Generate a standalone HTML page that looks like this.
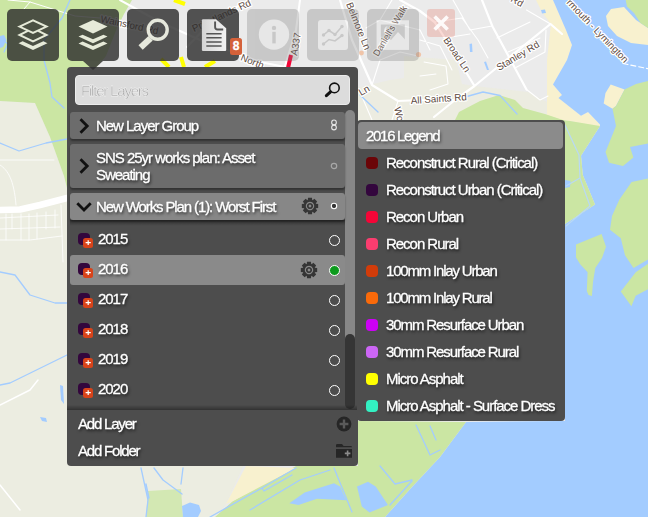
<!DOCTYPE html>
<html lang="en">
<head>
<meta charset="utf-8">
<title>Layers</title>
<style>
*{box-sizing:border-box;margin:0;padding:0}
html,body{width:648px;height:517px;overflow:hidden;background:#e8e8e8}
body{position:relative;font-family:"Liberation Sans",sans-serif;font-size:15px;letter-spacing:-1.03px;color:#fff;-webkit-text-stroke:0.3px #fff}
#map{position:absolute;left:0;top:0;width:648px;height:517px;display:block}
.tb{position:absolute;top:9px;width:52px;height:52px;border-radius:5px;background:rgba(42,42,42,.8)}
.tb.dis{background:rgb(122,122,122);opacity:.3}
.tb svg{position:absolute;left:0;top:0;width:52px;height:52px}
#close{position:absolute;left:427px;top:9px;width:28px;height:28px;border-radius:3px;background:rgba(226,84,60,.22)}
#badge{position:absolute;left:230px;top:38px;width:12px;height:17px;border-radius:2.5px;background:#d4613a;color:#fff;font-weight:bold;font-size:12px;line-height:17px;text-align:center;letter-spacing:0}
#panel{will-change:transform;position:absolute;left:67px;top:67px;width:291px;height:399px;background:#4d4d4d;border-radius:4px}
#arrow{position:absolute;left:83px;top:61px;width:0;height:0;border-left:10px solid transparent;border-right:10px solid transparent;border-top:9.5px solid rgba(45,45,45,.8);z-index:5}
#filter{position:absolute;left:8px;top:8px;width:274.5px;height:30px;background:#dcdcdc;border:1px solid #ececec;border-radius:4px;color:#a6a6a6;font-size:15px;line-height:29px;padding-left:5px;letter-spacing:-1.2px}
.grp{position:absolute;left:3px;width:274.5px;background:#6c6c6c;border-radius:3px;box-shadow:0 2px 2px rgba(0,0,0,.35);text-shadow:1px 2px 3px rgba(0,0,0,.7)}
.grp .t{position:absolute;left:26px;top:0;font-size:15px;line-height:17px}
.row{position:absolute;left:3px;width:274.5px;height:30px;border-radius:3px;text-shadow:1px 2px 3px rgba(0,0,0,.7)}
.row .t{position:absolute;left:28px;top:5px;font-size:15px;line-height:17px}
.row .ic{position:absolute;left:8px;top:8px;width:12px;height:12px;border-radius:4px;background:#33063d}
.row .pl{position:absolute;left:13px;top:13px;width:10px;height:10px;border-radius:2.5px;background:#d8431a}
.row .rd{position:absolute;left:258.5px;top:10px;width:11px;height:11px;border-radius:50%;border:1.7px solid #fff}
#legend{will-change:transform;position:absolute;left:357px;top:120px;width:208px;height:301px;background:#4d4d4d;border-radius:4px}
#ltitle{position:absolute;left:1px;top:2px;width:205px;height:27px;background:#8b8b8b;border-radius:4px;font-size:15px;line-height:27px;padding-left:8px;text-shadow:1px 2px 3px rgba(0,0,0,.6)}
.li{position:absolute;left:0;height:27px;width:208px;text-shadow:1px 2px 3px rgba(0,0,0,.7)}
.li i{position:absolute;left:9px;top:7px;width:12px;height:12px;border-radius:4px}
.li span{position:absolute;left:29px;top:4px;font-size:15px;line-height:17px;white-space:nowrap}
.foot{position:absolute;left:11px;letter-spacing:-1.2px;font-size:15px;line-height:17px;text-shadow:1px 2px 3px rgba(0,0,0,.7)}

.chev{position:absolute;left:8px;width:12px;height:18px}
.ind{position:absolute;left:259px;width:10px;height:14px}
.gear{position:absolute;width:20px;height:20px}
#sbtrack{position:absolute;left:278px;top:43px;width:10px;height:230px;background:#878787;border-radius:5px 5px 0 0}
#sbthumb{position:absolute;left:278px;top:267px;width:10px;height:75px;background:#353535;border-radius:5px}
#listshadow{position:absolute;left:3px;top:153px;width:275px;height:6px;background:linear-gradient(rgba(0,0,0,.35),rgba(0,0,0,0))}
#footline{position:absolute;left:0;top:338px;width:291px;height:5px;background:linear-gradient(rgba(0,0,0,0),rgba(0,0,0,.35))}
.row .pl svg{position:absolute;left:0;top:0;width:10px;height:10px}
</style>
</head>
<body>
<svg id="map" viewBox="0 0 648 517">
<rect width="648" height="517" fill="#ebebeb"/>
<!--MAPSTART-->
<!-- pale natural land -->
<polygon fill="#ecede1" points="0,101 35,103 50,137 64,176 67,188 130,188 130,517 0,517"/>
<polygon fill="#ecede1" points="130,460 246,460 226,504 215,517 130,517"/>
<polygon fill="#ecede6" points="0,68 6,68 6,100 0,100"/>
<!-- green top-left -->
<polygon fill="#cbe6a3" points="0,0 132,0 124,14 117,28 106,56 94,70 75,110 75,190 67,188 64,176 50,137 35,103 0,101"/>
<!-- pale patch mid top -->
<polygon fill="#ecece1" points="404,56 456,60 462,84 474.5,86 492,88 528,92 547,102 547,118 356,122 356,88 390,80 404,78"/>
<!-- beach strip -->
<polygon fill="#f8f1cf" points="536,0 553,0 566,30 572,45 567,60 553,84.4 562,95 558.5,98 581,115.7 588,112 600,124.5 598,127 570,121 547,120 547,60 551,24 542,12"/>
<!-- green below all saints rd -->
<polygon fill="#cbe6a3" points="455,120 459,112 480,101 499,95 515,100 523,108 545,114 566,121 566,130 455,130"/>
<!-- water -->
<polygon fill="#a3ccff" points="553,0 566,30 572,45 567,60 553,84.4 562,95 558.5,98 581,115.7 588,112 600,124.5 600,126 581,155.8 582.8,175 595,204.6 565,224 565,421 466,422 440,457 411,488 385,517 648,517 648,0"/>
<!-- harbour green by legend -->
<polygon fill="#cbe6a3" points="560,120 570,121 600,126 581,155.8 582.8,175 595,204.6 565,224 560,230"/><polygon fill="#a3ccff" points="565,180 570.6,181 570,187 565,188"/>
<!-- top right beach + green -->
<polygon fill="#f8f1cf" points="606,16 611,9 624,7 636,20 648,28 648,45 631,43 617,36 608,26"/>
<polygon fill="#cbe6a3" points="625.7,0 648,0 648,28 640.5,23 634,13 627,6.5"/>
<!-- island 1 -->
<polygon fill="#f8f1cf" points="610.7,84.4 624.6,89.6 616,106 612.5,108.8 603.7,103.5 605.5,93"/>
<polygon fill="#cbe6a3" points="616,106 624.6,89.6 636,84 648,81 648,143.6 630,147 633.4,157.5 623,166 609,162.8 605.5,152 616,126 612.5,108.8"/>
<!-- island 2 -->
<polygon fill="#cbe6a3" points="648,178.5 631.6,182 619.4,199.4 612,216 610,229.8 620.8,238.3 625,255.3 633.5,268 648,259.5"/><polygon fill="#cbe6a3" points="648,263.8 635.7,272.3 620.8,291.4 631.4,306.3 635.7,295.7 648,289.3"/>
<!-- island 3 -->
<polygon fill="#cbe6a3" points="576,244.6 601.6,234 606,246.8 602,258 595.3,268 593,282 591.9,296 588.5,295 586.8,291 587.6,272.3 580,264 576,257.4"/>
<!-- bottom coast green -->
<polygon fill="#cbe6a3" points="296,466 358,466 358,421 466,422 440,457 411,488 385,517 215,517 233,501"/>
<polygon fill="#f8f1cf" points="246,466 296,468 233,501 226,504"/>
<polygon fill="#d3e8b3" points="148,491 181,489 183,517 146,517"/>
<!-- lagoons -->
<polygon fill="#a3ccff" points="289.3,503.3 304.7,492.5 334,483.3 340,486.4 346.4,500.2 317,498.7 298.5,504.9"/>
<polygon fill="#a3ccff" points="357,486.4 368,481.7 375.7,486.4 388,504.9 369.5,512.6 361.8,506.4"/>
<polygon fill="#a3ccff" points="182,506 190,502.5 199,505 201,511 198,517 183,517"/><polygon fill="#a3ccff" points="40,417 46,418 47,422 42,421"/><polygon fill="#a3ccff" points="60,385 63,386 64,404 61,400"/>
<polygon fill="#a3ccff" points="469.5,44 472,43.5 472.5,52 470,52"/><polygon fill="#a3ccff" points="484,62 486,61.5 489,70 487,70"/><polygon fill="#a3ccff" points="541,10 545,9.5 546,13 542,13.5"/>
<polygon fill="#a3ccff" points="0,36 4,35 6.5,40 3,47 0,48"/>
<!-- roads (white) -->
<g fill="none" stroke="#ffffff" stroke-linecap="round" stroke-linejoin="round">
<path stroke-width="6.5" d="M0,210 L20,209.5 L40,205 L67,198"/>
<path stroke-width="1.5" d="M0,405 L30,390 L38,380 M0,485 L20,510"/>
<path stroke-width="0.8" d="M0,160 H54 M0,218 L58,215 M0,229 L60,227 M0,240 L30,240 L62,236 M6,214 V240 M12,214 V229 M21,214 V240 M29,214 V240 M37,213 V239 M46,212 V229 M55,210 V228 M61,205 L63,262 M0,165 C8,170 14,180 16,205"/>
<path stroke-width="1" d="M8,0 L30,2 L75,16 L100,18 M30,2 L24,9"/>
<path stroke-width="2" d="M120,0 L160,22 L200,40 L260,62 L300,70 M187,47 L215,18 L250,0 M285,66 L296,30 L300,0"/>
<path stroke-width="2.2" d="M400,0 L420,11 L434.5,22 L451.5,48.5 L474.5,86 L455,100 L434,117 M474.5,86 L500,65 L550.5,24 L562,34 M482,0 L492.5,26.5 L526.5,89.5 M340,0 L352,40 L372,85 L398,101 L420,100 L455,100"/>
<path stroke-width="1.1" d="M526.5,10 L550.5,24 M453,0 L470,30 L492,26 M497,38 L530,22 M508,52 L540,38 M515,68 L545,52 L546,30 M434.5,22 L462,18 L478,40 L488,58 M445,38 L470,34 M420,40 L440,46 L452,70 M424,62 L446,66 L448,84 L430,90 M420,76 L436,74 M372,85 L380,60 L400,52 L418,56 M398,101 L392,120 M360,92 L372,120 M380,20 L420,30 L430,50 M366,28 L380,20 L392,0 M526.5,89.5 L540,100 L548,96"/>
</g>
<!-- streams -->
<g fill="none" stroke="#a3ccff" stroke-width="1.3" stroke-linecap="round" stroke-linejoin="round">
<path d="M70,0 L62,18 L44,40 L44,60 L50,83 L52,97 L64,108"/>
<path d="M0,143 L19,151 L46,143 L67,139 M0,272 L15,275 L30,295 L55,303 L67,303 M0,385 L10,383 L67,355"/>
<path d="M0,38 L8,44 L4,52 M141,468 L148,500 L146,517 M154,468 L163,480 L182,494 M183,468 L181,484 M146,484 L149,498"/>
<path d="M210,517 L262,488 L296,468 M262,488 L264,491 L292,475 M250,510 L300,480 L330,470 M334,468 L345,495 L352,512 M380,466 L395,484 L412,480 M390,505 L412,481 M416,425 L430,455 L440,450 M430,426 L436,440"/>
<path d="M340,75 L350,82 L345,90 M360,95 L378,112 M465,97 L483,92 L500,95.5 L517,114"/>
<path d="M564,123 L579,155 L580,178 L566,186 M566,226 L590,206 L580,178" stroke="#b9d9f5" stroke-width="1.2"/><path d="M623,63.5 L648,68.7" stroke="#ffffff" stroke-width="1.2" stroke-dasharray="5 3"/>
</g>
<!-- coloured asset lines -->
<g fill="none" stroke-linecap="butt">
<path stroke="#ffff00" stroke-width="4" d="M161,59 L169,67 M181,57 L184,67 M205,67 L215,61 M174,0 L185,4"/>
<path stroke="#f50537" stroke-width="4" d="M291,55 L288,68"/>
</g>
<circle cx="418.5" cy="54.5" r="2.6" fill="#f0c4a8"/><circle cx="361.5" cy="53" r="2.4" fill="#f0c4a8"/>
<!-- labels -->
<g font-family="Liberation Sans, sans-serif" font-size="9.8" fill="#5e4b42" letter-spacing="0" stroke="#ffffff" stroke-width="2.5" paint-order="stroke" stroke-linejoin="round">
<text transform="translate(100,22) rotate(12)">Wainsford Rd</text>
<text transform="translate(194,32) rotate(-25)">Priestlands Rd</text>
<text transform="translate(240,60) rotate(22)">North</text>
<text transform="translate(297,56) rotate(-80)">A337</text>
<text transform="translate(346,4) rotate(68)">Belmore Ln</text>
<text transform="translate(378,57) rotate(-59)" font-size="9.2">Daniell's Walk</text>
<text transform="translate(443,40) rotate(56)">Broad Ln</text>
<text transform="translate(499,71) rotate(-31)">Stanley Rd</text>
<text transform="translate(411,104) rotate(-4)">All Saints Rd</text>
<text transform="translate(361,96) rotate(-30)">Ln</text>
<text transform="translate(394,108) rotate(75)">Wo</text>
<text transform="translate(566,3) rotate(46)">rmouth - Lymington</text>
<text transform="translate(510,1) rotate(30)">Rd</text>
</g>
<!--MAPEND-->
</svg>

<div class="tb" style="left:7px"><svg viewBox="0 0 52 52"><g fill="none" stroke="#e6ead8" stroke-width="2" stroke-linejoin="miter"><path d="M12.5,17.6 L26,11.4 L39.5,17.6 L26,23.8 Z"/><path d="M20.8,21.9 L12.5,26 L26,32.3 L39.5,26 L31.2,21.9"/></g><path fill="#e6ead8" d="M11.5,34.2 L15.6,32.3 L26,37.0 L36.4,32.3 L40.5,34.2 L26,40.9 Z"/></svg></div>
<div class="tb" style="left:67px"><svg viewBox="0 0 52 52"><g fill="#e6ead8"><path d="M11.5,17.6 L26,10.9 L40.5,17.6 L26,24.5 Z"/><path d="M11.5,27.6 L15.6,25.7 L26,30.2 L36.4,25.7 L40.5,27.6 L26,34.3 Z"/><path d="M11.5,34.4 L15.6,32.5 L26,37.0 L36.4,32.5 L40.5,34.4 L26,41.1 Z"/></g></svg></div>
<div class="tb" style="left:127px"><svg viewBox="0 0 52 52"><circle cx="30.7" cy="20.8" r="9.5" fill="none" stroke="#e6e8dc" stroke-width="3.4"/><path d="M23.6,29.2 L13.6,38.6" stroke="#e6e8dc" stroke-width="6.2" stroke-linecap="butt" fill="none"/></svg></div>
<div class="tb" style="left:187px"><svg viewBox="0 0 52 52"><defs><linearGradient id="dg" x1="0" y1="0" x2="1" y2="0"><stop offset="0" stop-color="#d4d4d4"/><stop offset="1" stop-color="#f2f2f2"/></linearGradient></defs><path fill="url(#dg)" d="M16,10.3 H29 L39.2,19.2 V40.9 Q39.2,41.9 38.2,41.9 H16 Q14.9,41.9 14.9,40.9 V11.3 Q14.9,10.3 16,10.3 Z"/><path fill="none" stroke="#555" stroke-width="1.9" d="M28.1,12.4 V18 Q28.1,20.5 30.6,20.5 H36.2"/><g stroke="#555" stroke-width="1.5"><path d="M19.3,24.7 H34.6 M19.3,28.8 H34.6 M19.3,32.9 H34.6 M19.3,37 H34.6"/></g></svg></div>
<div class="tb dis" style="left:247px"><svg viewBox="0 0 52 52"><circle cx="27" cy="25.6" r="15.2" fill="#e0e0e0"/><circle cx="27" cy="18.9" r="2.2" fill="#7a7a7a"/><rect x="25.3" y="22.8" width="3.4" height="11.6" fill="#7a7a7a"/></svg></div>
<div class="tb dis" style="left:307px"><svg viewBox="0 0 52 52"><rect x="11" y="10.9" width="30" height="30" rx="3" fill="#e0e0e0"/><g fill="none" stroke="#7a7a7a" stroke-width="1.6"><path d="M16.5,26 L22,21.5 L28,25.5 L35,17.5"/><path d="M16.5,35 L22,30.5 L28,32 L35,26.5"/></g><g fill="#7a7a7a"><circle cx="16.5" cy="26" r="1.7"/><circle cx="22" cy="21.5" r="1.7"/><circle cx="28" cy="25.5" r="1.7"/><circle cx="35" cy="17.5" r="1.7"/><circle cx="16.5" cy="35" r="1.7"/><circle cx="35" cy="26.5" r="1.7"/></g></svg></div>
<div class="tb dis" style="left:367px"><svg viewBox="0 0 52 52"><rect x="11.7" y="13.4" width="28.2" height="25.4" fill="none" stroke="#e0e0e0" stroke-width="4.2"/><path fill="#e0e0e0" d="M13,37.5 L13,33 L19,28 L24,31 L31,23 L38.5,31 V37.5 Z"/><path fill="#e0e0e0" d="M21,17 A4.6,4.6 0 1 0 25.5,24 A4,4 0 0 1 21,17 Z"/></svg></div>
<div id="close"><svg viewBox="0 0 28 28" style="position:absolute;left:0;top:0;width:28px;height:28px"><path d="M7.6,7.4 L20.6,20.6 M20.6,7.4 L7.6,20.6" stroke="#fff" stroke-opacity=".9" stroke-width="3.6" fill="none"/></svg></div>
<div id="badge">8</div>
<div id="arrow"></div>

<div id="panel">
  <div id="filter">Filter Layers<svg viewBox="0 0 20 20" style="position:absolute;right:6.5px;top:4px;width:20px;height:20px"><circle cx="12.4" cy="7.9" r="4.8" fill="none" stroke="#111" stroke-width="1.6"/><path d="M8.5,11.9 L4.4,15.6" stroke="#111" stroke-width="3.1" stroke-linecap="round"/></svg></div>
  <div id="sbtrack"></div><div id="sbthumb"></div>
  <div class="grp" style="top:45px;height:27px"><svg class="chev" viewBox="0 0 12 18" style="top:5px"><path d="M2.5,2.3 L9.2,9 L2.5,15.7" fill="none" stroke="#111" stroke-width="2.8"/></svg><div class="t" style="top:5px">New Layer Group</div><svg class="ind" viewBox="0 0 10 14" style="top:6px"><g fill="none" stroke="#e4e4e4" stroke-width="1.1"><circle cx="5" cy="4.4" r="2.35"/><circle cx="5" cy="9.5" r="2.35"/></g></svg></div>
  <div class="grp" style="top:77px;height:44px"><svg class="chev" viewBox="0 0 12 18" style="top:13px"><path d="M2.5,2.3 L9.2,9 L2.5,15.7" fill="none" stroke="#111" stroke-width="2.8"/></svg><div class="t" style="top:5px">SNS 25yr works plan: Asset<br>Sweating</div><svg class="ind" viewBox="0 0 10 14" style="top:15px"><circle cx="5" cy="7" r="2.7" fill="none" stroke="#a8a8a8" stroke-width="1.2"/></svg></div>
  <div class="grp" style="top:126px;height:27px;background:#878787"><svg class="chev" viewBox="0 0 18 12" style="left:5px;top:8px;width:18px;height:12px"><path d="M2.3,2.3 L9,9 L15.7,2.3" fill="none" stroke="#111" stroke-width="2.8"/></svg><div class="t" style="top:5px;letter-spacing:-1.11px">New Works Plan (1): Worst First</div><svg class="gear" style="left:229.5px;top:3.4px" viewBox="-10 -10 20 20"><path fill="#353535" fill-rule="evenodd" d="M-2.23,-5.89 L-1.96,-8.17 L1.96,-8.17 L2.23,-5.89 L2.59,-5.74 L4.39,-7.16 L7.16,-4.39 L5.74,-2.59 L5.89,-2.23 L8.17,-1.96 L8.17,1.96 L5.89,2.23 L5.74,2.59 L7.16,4.39 L4.39,7.16 L2.59,5.74 L2.23,5.89 L1.96,8.17 L-1.96,8.17 L-2.23,5.89 L-2.59,5.74 L-4.39,7.16 L-7.16,4.39 L-5.74,2.59 L-5.89,2.23 L-8.17,1.96 L-8.17,-1.96 L-5.89,-2.23 L-5.74,-2.59 L-7.16,-4.39 L-4.39,-7.16 L-2.59,-5.74 Z M0,-4.2 a4.2,4.2 0 1 0 0.001,0 Z"/><path fill="#353535" fill-rule="evenodd" d="M0,-3.1 a3.1,3.1 0 1 0 0.001,0 Z M0,-1.4 a1.4,1.4 0 1 0 0.001,0 Z"/></svg><svg class="ind" viewBox="0 0 10 14" style="top:6px"><circle cx="5" cy="7" r="2.7" fill="#333" stroke="#fff" stroke-width="1.1"/></svg></div>
  <div id="listshadow"></div>
  <div class="row" style="top:158px"><i class="ic"></i><i class="pl"><svg viewBox="0 0 10 10"><path d="M2.6,4.7 H7.8 M5.2,2.2 V7.1" stroke="#fff" stroke-width="1.25" fill="none"/></svg></i><div class="t">2015</div><i class="rd"></i></div>
  <div class="row" style="top:188px;background:#8a8a8a"><i class="ic"></i><i class="pl"><svg viewBox="0 0 10 10"><path d="M2.6,4.7 H7.8 M5.2,2.2 V7.1" stroke="#fff" stroke-width="1.25" fill="none"/></svg></i><div class="t">2016</div><svg class="gear" style="left:228.7px;top:5px" viewBox="-10 -10 20 20"><path fill="#353535" fill-rule="evenodd" d="M-2.23,-5.89 L-1.96,-8.17 L1.96,-8.17 L2.23,-5.89 L2.59,-5.74 L4.39,-7.16 L7.16,-4.39 L5.74,-2.59 L5.89,-2.23 L8.17,-1.96 L8.17,1.96 L5.89,2.23 L5.74,2.59 L7.16,4.39 L4.39,7.16 L2.59,5.74 L2.23,5.89 L1.96,8.17 L-1.96,8.17 L-2.23,5.89 L-2.59,5.74 L-4.39,7.16 L-7.16,4.39 L-5.74,2.59 L-5.89,2.23 L-8.17,1.96 L-8.17,-1.96 L-5.89,-2.23 L-5.74,-2.59 L-7.16,-4.39 L-4.39,-7.16 L-2.59,-5.74 Z M0,-4.2 a4.2,4.2 0 1 0 0.001,0 Z"/><path fill="#353535" fill-rule="evenodd" d="M0,-3.1 a3.1,3.1 0 1 0 0.001,0 Z M0,-1.4 a1.4,1.4 0 1 0 0.001,0 Z"/></svg><i class="rd" style="background:#0c9a1c"></i></div>
  <div class="row" style="top:218px"><i class="ic"></i><i class="pl"><svg viewBox="0 0 10 10"><path d="M2.6,4.7 H7.8 M5.2,2.2 V7.1" stroke="#fff" stroke-width="1.25" fill="none"/></svg></i><div class="t">2017</div><i class="rd"></i></div>
  <div class="row" style="top:248px"><i class="ic"></i><i class="pl"><svg viewBox="0 0 10 10"><path d="M2.6,4.7 H7.8 M5.2,2.2 V7.1" stroke="#fff" stroke-width="1.25" fill="none"/></svg></i><div class="t">2018</div><i class="rd"></i></div>
  <div class="row" style="top:278px"><i class="ic"></i><i class="pl"><svg viewBox="0 0 10 10"><path d="M2.6,4.7 H7.8 M5.2,2.2 V7.1" stroke="#fff" stroke-width="1.25" fill="none"/></svg></i><div class="t">2019</div><i class="rd"></i></div>
  <div class="row" style="top:308px"><i class="ic"></i><i class="pl"><svg viewBox="0 0 10 10"><path d="M2.6,4.7 H7.8 M5.2,2.2 V7.1" stroke="#fff" stroke-width="1.25" fill="none"/></svg></i><div class="t">2020</div><i class="rd"></i></div>
  <div id="footline"></div>
  <div class="foot" style="top:348px">Add Layer</div>
  <svg viewBox="0 0 16 16" style="position:absolute;left:269px;top:349px;width:16px;height:16px"><circle cx="8" cy="8" r="7.4" fill="#262626"/><path d="M8,3.6 V12.4 M3.6,8 H12.4" stroke="#5a5a5a" stroke-width="2.4"/></svg>
  <div class="foot" style="top:375px">Add Folder</div>
  <svg viewBox="0 0 18 16" style="position:absolute;left:268px;top:376px;width:18px;height:16px"><path d="M1,2.2 Q1,1 2.2,1 H7 L8.6,3 H15.8 Q17,3 17,4.2 V14.8 H1 Z" fill="#262626"/><path d="M1,5.1 H17" stroke="#4d4d4d" stroke-width="1.8"/><path d="M12.6,7.6 V13.2 M9.8,10.4 H15.4" stroke="#8c8c8c" stroke-width="1.6"/></svg>
</div>

<div id="legend">
  <div id="ltitle"><span style="letter-spacing:-1.3px">2016 Legend</span></div>
  <div class="li" style="top:30px"><i style="background:#6b0508"></i><span>Reconstruct Rural (Critical)</span></div>
  <div class="li" style="top:57px"><i style="background:#33063d"></i><span>Reconstruct Urban (Critical)</span></div>
  <div class="li" style="top:84px"><i style="background:#f50537"></i><span>Recon Urban</span></div>
  <div class="li" style="top:111px"><i style="background:#fb3d6f"></i><span>Recon Rural</span></div>
  <div class="li" style="top:138px"><i style="background:#d23c0a"></i><span style="letter-spacing:-1.19px">100mm Inlay Urban</span></div>
  <div class="li" style="top:165px"><i style="background:#fa6a0a"></i><span style="letter-spacing:-1.19px">100mm Inlay Rural</span></div>
  <div class="li" style="top:192px"><i style="background:#cc00f5"></i><span style="letter-spacing:-1.1px">30mm Resurface Urban</span></div>
  <div class="li" style="top:219px"><i style="background:#cc66f5"></i><span style="letter-spacing:-1.1px">30mm Resurface Rural</span></div>
  <div class="li" style="top:246px"><i style="background:#ffff00"></i><span>Micro Asphalt</span></div>
  <div class="li" style="top:273px"><i style="background:#33f0c2"></i><span>Micro Asphalt - Surface Dress</span></div>
</div>
</body>
</html>
